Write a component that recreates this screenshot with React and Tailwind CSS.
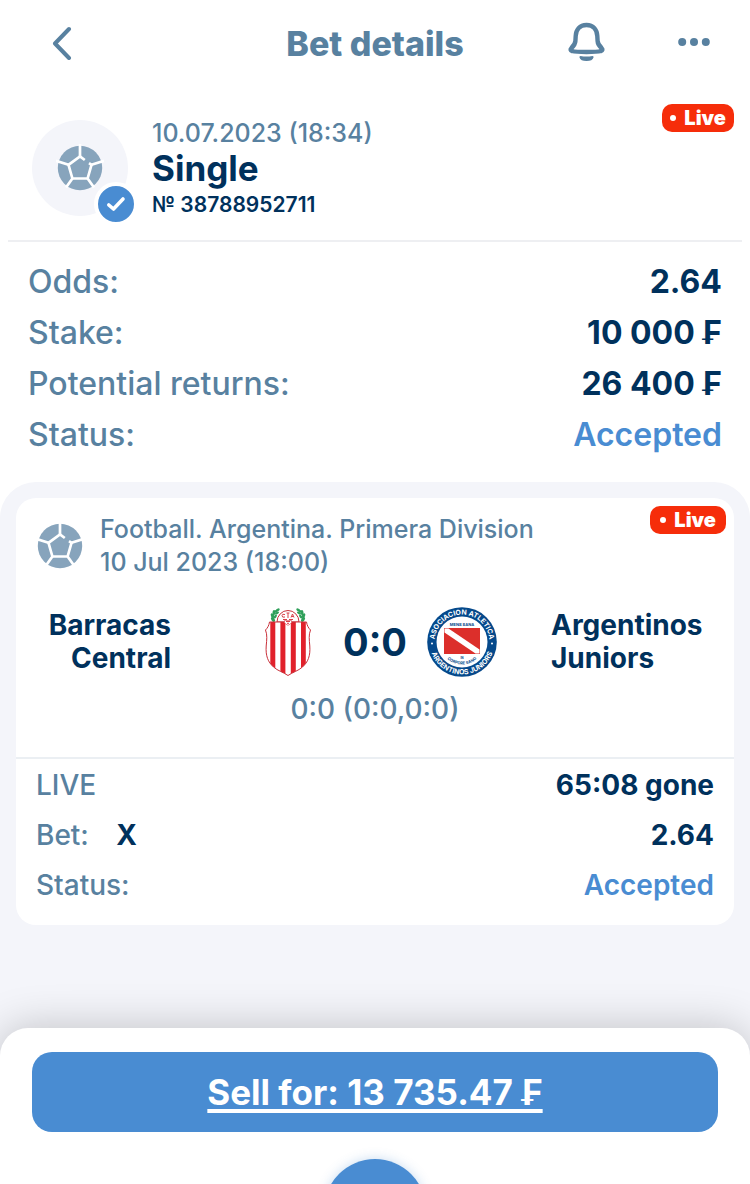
import React from 'react';

const summary = [
  { label: 'Odds:', value: '2.64' },
  { label: 'Stake:', value: '10 000 ₣' },
  { label: 'Potential returns:', value: '26 400 ₣' },
  { label: 'Status:', value: 'Accepted', accent: true },
];

function BallIcon() {
  return (
    <svg viewBox="-24 -24 48 48" className="size-12 shrink-0" aria-hidden="true">
      <circle r="22.2" fill="#87a4bc" />
      <g fill="none" stroke="#fff" strokeWidth="2.7">
        <path d="M0-24v13M11.5-3.2 24-7.2M7.6 10.5 14 19.5M-7.6 10.5-14 19.5M-11.5-3.2-24-7.2" />
        <path d="M4.8-8 0-11.6-11.5-3.2-7.6 10.5H7.6L11.5-3.2 9-4.8" />
      </g>
    </svg>
  );
}

function LiveBadge({ padding = 'px-2' }) {
  return (
    <span className={`flex h-7 items-center gap-2 rounded-[10px] bg-[#f62d0a] text-xl font-black text-white ${padding}`}>
      <span className="size-1.5 rounded-full bg-white" />
      Live
    </span>
  );
}

function Laurel() {
  return (
    <g fill="#2fa05a">
      <path d="M9 13C6.500 9 8 4 13 1.500" fill="none" stroke="#2fa05a" strokeWidth="1.400" />
      <ellipse cx="8" cy="11.500" rx="1.600" ry="2.800" transform="rotate(-35 8 11.500)" />
      <ellipse cx="7.400" cy="7.800" rx="1.500" ry="2.700" transform="rotate(-20 7.400 7.800)" />
      <ellipse cx="9" cy="4.500" rx="1.500" ry="2.600" transform="rotate(5 9 4.500)" />
      <ellipse cx="12.500" cy="2.200" rx="1.300" ry="2.500" transform="rotate(55 12.500 2.200)" />
      <ellipse cx="10.300" cy="8.500" rx="1.200" ry="2.200" transform="rotate(35 10.300 8.500)" />
      <ellipse cx="12" cy="5" rx="1.200" ry="2.200" transform="rotate(60 12 5)" />
    </g>
  );
}

function BarracasCrest() {
  const shield =
    'M4.500 14H41.500C42 17.500 43.500 20 45.500 22C43.500 27 44.300 32 44.800 38C45.500 48 43 54 37.500 59C33 63 28 64 23 67.500C18 64 13 63 8.500 59C3 54 .5 48 1.200 38C1.700 32 2.500 27 .5 22C2.500 20 4 17.500 4.500 14Z';
  return (
    <svg viewBox="0 0 46 68" className="h-[68px] w-[46px]" role="img" aria-label="Barracas Central">
      <defs>
        <clipPath id="shield">
          <path d={shield} />
        </clipPath>
      </defs>
      <Laurel />
      <g transform="translate(46 0) scale(-1 1)">
        <Laurel />
      </g>
      <path d="M12 14a11 11.500 0 0 1 22 0z" fill="#fff" stroke="#c9303a" strokeWidth="1" />
      <path d={shield} fill="#fff" />
      <g clipPath="url(#shield)" fill="#e1212b">
        <path d="M5.300 14h5v54h-5zM15.400 14h5v54h-5zM25.800 14h5v54h-5zM36 14h4.800v54H36z" />
      </g>
      <path d={shield} fill="none" stroke="#c9303a" strokeWidth="1" />
      <path d="M19.500 12.500h7v2q-1 2-3.500 2.800-2.500-.8-3.500-2.800z" fill="#fff" stroke="#d9404a" strokeWidth=".6" />
      <g fill="none" stroke="#d9404a" strokeWidth="1">
        <path d="M20 6.500q-3-1-3 1.200t3 1.300M23 5v5M21.500 5h3M26 9.500l1.500-3.500L29 9.500M26.500 8.500h2" />
        <path d="M18 11.500h4M24 11.500h4M21 13.500h4M22 15.300h2" />
      </g>
    </svg>
  );
}

function ArgentinosCrest() {
  return (
    <svg viewBox="-35 -35 70 70" className="size-[70px]" role="img" aria-label="Argentinos Juniors">
      <defs>
        <path id="arc-top" d="M-27.400 0A27.400 27.400 0 0 1 27.400 0" />
        <path id="arc-bottom" d="M-32.400 0A32.400 32.400 0 0 0 32.400 0" />
        <path id="arc-motto" d="M-22.500 0A22.500 22.500 0 0 0 22.500 0" />
      </defs>
      <circle r="34.800" fill="#05498b" />
      <circle r="25.500" fill="#fff" />
      <g fill="#fff" fontSize="7" fontWeight="700" textAnchor="middle">
        <text><textPath href="#arc-top" startOffset="50%">ASOCIACION ATLETICA</textPath></text>
        <text><textPath href="#arc-bottom" startOffset="50%">ARGENTINOS JUNIORS</textPath></text>
      </g>
      <circle cx="-30" cy="1.500" r="1" fill="#fff" />
      <circle cx="30" cy="1.500" r="1" fill="#fff" />
      <path d="M-18-14h36v26h-36z" fill="#dc2f2b" />
      <path d="M-17.500-13.500h4L17.500 7.500v4h-4L-17.500-9.500z" fill="#fff" />
      <g fill="#05498b" fontWeight="700" textAnchor="middle">
        <text y="-16" fontSize="4">MENS SANA</text>
        <text y="16.500" fontSize="3">IN</text>
        <text fontSize="4"><textPath href="#arc-motto" startOffset="50%">CORPORE SANO</textPath></text>
      </g>
    </svg>
  );
}

function Header() {
  return (
    <header className="grid h-22 grid-cols-[1fr_auto_1fr] items-center px-10 pb-1 text-[#5881a0]">
      <button type="button" aria-label="Back" className="flex size-11 items-center justify-center">
        <svg viewBox="0 0 20 36" className="h-9 w-5" fill="none" stroke="currentColor" strokeWidth="4" strokeLinecap="round" strokeLinejoin="round">
          <path d="M17 5 3 19.500 17 34" />
        </svg>
      </button>
      <h1 className="pt-1 text-[34px] leading-10 font-extrabold">Bet details</h1>
      <div className="flex items-center justify-end gap-18">
        <button type="button" aria-label="Notifications">
          <svg viewBox="0 0 40 42" className="h-[42px] w-10">
            <path
              d="M20.500 4C13.500 4 10 9 9.700 15l-.3 5c-.2 3.500-1.500 4.800-4 7-1.400 1.300-1 2.600.6 3 5 1.400 24 1.400 29 0 1.600-.4 2-1.700.6-3-2.500-2.200-3.800-3.500-4-7l-.3-5C31 9 27.500 4 20.500 4z"
              fill="none"
              stroke="currentColor"
              strokeWidth="4.400"
              strokeLinejoin="round"
            />
            <path d="M14.500 35q6 1 12 0 1.500 0 1 1.500-1 3.500-7 3.500t-7-3.500q-.5-1.500 1-1.500z" fill="currentColor" />
          </svg>
        </button>
        <button type="button" aria-label="More options" className="py-3">
          <svg viewBox="0 0 32 8" className="h-2 w-8" fill="currentColor">
            <circle cx="4.200" cy="4" r="4" />
            <circle cx="16" cy="4" r="4" />
            <circle cx="27.800" cy="4" r="4" />
          </svg>
        </button>
      </div>
    </header>
  );
}

function BetSummary() {
  return (
    <section>
      <div className="flex items-start gap-6 pt-4 pr-4 pb-5 pl-8">
        <div className="relative mt-4 flex size-24 shrink-0 items-center justify-center rounded-full bg-[#f4f5fa]">
          <BallIcon />
          {/* Accepted marker */}
          <span className="absolute -right-2.5 -bottom-2.5 flex size-11 items-center justify-center rounded-full border-4 border-white bg-[#498cd2]">
            <svg viewBox="0 0 20 16" className="h-4 w-5" fill="none" stroke="#fff" strokeWidth="3.600" strokeLinecap="round" strokeLinejoin="round">
              <path d="M2.800 9 7.500 13 17 3" />
            </svg>
          </span>
        </div>
        <div className="mt-4 grow">
          <p className="text-[25px] leading-[26px] font-medium text-[#5881a0]">10.07.2023 (18:34)</p>
          <h2 className="text-[35px] leading-[44px] font-bold">Single</h2>
          <p className="text-[21px] leading-[30px] font-semibold">№ 38788952711</p>
        </div>
        <LiveBadge />
      </div>
      <div className="mx-2 h-0.5 bg-[#eeeff2]" />
      <dl className="px-7 pt-3.5 pb-[22px] text-[32px] leading-[51px]">
        {summary.map((row) => (
          <div key={row.label} className="flex justify-between">
            <dt className="font-medium text-[#5881a0]">{row.label}</dt>
            <dd className={row.accent ? 'font-semibold text-[#498cd2]' : 'font-bold'}>{row.value}</dd>
          </div>
        ))}
      </dl>
    </section>
  );
}

function EventCard() {
  return (
    <article className="relative mx-4 mt-4 rounded-[20px] bg-white">
      <div className="absolute top-2 right-2">
        <LiveBadge padding="px-2.5" />
      </div>
      <div className="flex items-center gap-4 px-5 pt-[15px] text-[25px] leading-[33px] font-medium text-[#5881a0]">
        <BallIcon />
        <div>
          <p>Football. Argentina. Primera Division</p>
          <p>10 Jul 2023 (18:00)</p>
        </div>
      </div>

      <div className="mt-7 grid grid-cols-[1fr_252px_1fr] items-center">
        <p className="pr-19.5 text-right text-[28px] leading-[33px] font-bold">
          Barracas
          <br />
          Central
        </p>
        <div className="grid grid-cols-[78px_1fr_78px] items-center justify-items-center">
          <BarracasCrest />
          <p className="text-[38px] leading-10 font-bold">0:0</p>
          <ArgentinosCrest />
        </div>
        <p className="pl-12.5 text-[28px] leading-[33px] font-bold">
          Argentinos
          <br />
          Juniors
        </p>
      </div>
      <p className="mt-4 pb-[31px] text-center text-[28px] leading-[33px] font-medium text-[#5881a0]">0:0 (0:0,0:0)</p>

      <div className="h-0.5 bg-[#ebeff3]" />
      <dl className="px-5 pt-px pb-[15px] text-[28px] leading-[50px]">
        <div className="flex justify-between">
          <dt className="font-medium text-[#5881a0]">LIVE</dt>
          <dd className="font-bold">65:08 gone</dd>
        </div>
        <div className="flex justify-between">
          <dt className="font-medium text-[#5881a0]">
            Bet: <span className="ml-5 font-bold text-[#00315c]">X</span>
          </dt>
          <dd className="font-bold">2.64</dd>
        </div>
        <div className="flex justify-between">
          <dt className="font-medium text-[#5881a0]">Status:</dt>
          <dd className="font-semibold text-[#498cd2]">Accepted</dd>
        </div>
      </dl>
    </article>
  );
}

function SellBar() {
  return (
    <footer className="mt-auto rounded-t-[28px] bg-white px-8 pt-6 shadow-[0_0_44px_rgba(0,0,0,0.22)]">
      <button
        type="button"
        className="h-20 w-full rounded-[20px] bg-[#498cd2] text-[35px] font-bold text-white underline decoration-4 underline-offset-4"
      >
        Sell for: 13 735.47 ₣
      </button>
      {/* Only the top of the round nav button shows above the fold */}
      <div className="flex h-[52px] justify-center overflow-hidden pt-[27px]">
        <button type="button" aria-label="Menu" className="size-[102px] shrink-0 rounded-full bg-[#498cd2] shadow-[0_0_12px_rgba(73,140,210,0.3)]" />
      </div>
    </footer>
  );
}

export default function App() {
  return (
    <div className="flex min-h-screen flex-col overflow-hidden bg-white font-['Inter',sans-serif] text-[#00315c]">
      <Header />
      <BetSummary />
      <main className="flex grow flex-col rounded-t-[36px] bg-[#f4f5fa]">
        <EventCard />
        <SellBar />
      </main>
    </div>
  );
}
